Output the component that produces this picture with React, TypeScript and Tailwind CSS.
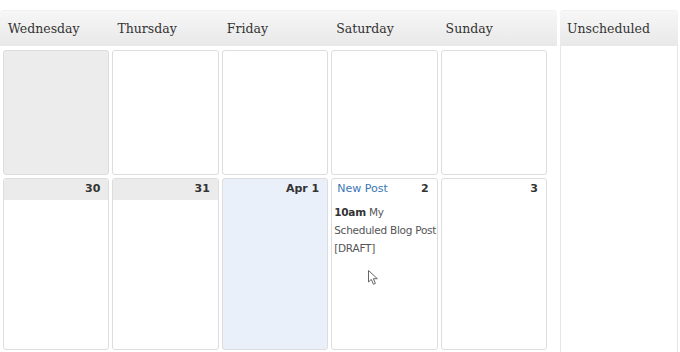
const days = ["Wednesday", "Thursday", "Friday", "Saturday", "Sunday"];

function DayNum({ label, gray }: { label: string; gray?: boolean }) {
  return (
    <div
      className={`h-[21px] flex items-center justify-end pr-[8px] text-[11px] font-bold text-[#333] ${
        gray ? "bg-[#ebebeb]" : ""
      }`}
    >
      {label}
    </div>
  );
}

function Cursor() {
  return (
    <svg
      className="absolute left-[368px] top-[270px]"
      width="12"
      height="16"
      viewBox="0 0 12 16"
    >
      <path
        d="M0.5 0.5 L0.5 12 L3.3 9.4 L5.4 14.3 L7.4 13.4 L5.4 8.7 L9.3 8.7 Z"
        fill="white"
        stroke="#666"
        strokeWidth="1"
        strokeLinejoin="round"
      />
    </svg>
  );
}

export default function App() {
  return (
    <div className="w-[680px] h-[352px] bg-white overflow-hidden relative font-['DejaVu_Sans',sans-serif]">
      <div className="flex pt-[10px] h-full">
        {/* calendar */}
        <div className="w-[557px] flex flex-col">
          <div className="h-[36px] rounded-t-[4px] border-t border-[#f0f0f0] bg-gradient-to-b from-[#f7f7f7] to-[#e8e8e8] grid grid-cols-5 gap-[3px] pl-[3px] pr-[10px]">
            {days.map((d) => (
              <div
                key={d}
                className="flex items-center pl-[5px] pt-[2px] font-['DejaVu_Serif',serif] text-[12.5px] text-[#333]"
              >
                {d}
              </div>
            ))}
          </div>
          <div className="grid grid-cols-5 gap-[3px] pl-[3px] pr-[10px] pt-[4px]">
            <div className="h-[125px] rounded-[3px] border border-[#ddd] bg-[#ececec]" />
            <div className="h-[125px] rounded-[3px] border border-[#ddd]" />
            <div className="h-[125px] rounded-[3px] border border-[#ddd]" />
            <div className="h-[125px] rounded-[3px] border border-[#ddd]" />
            <div className="h-[125px] rounded-[3px] border border-[#ddd]" />
          </div>
          <div className="grid grid-cols-5 gap-[3px] pl-[3px] pr-[10px] pt-[3px]">
            <div className="h-[172px] rounded-[3px] border border-[#ddd] overflow-hidden">
              <DayNum label="30" gray />
            </div>
            <div className="h-[172px] rounded-[3px] border border-[#ddd] overflow-hidden">
              <DayNum label="31" gray />
            </div>
            <div className="h-[172px] rounded-[3px] border border-[#ddd] bg-[#e9f0fa] overflow-hidden">
              <DayNum label="Apr 1" />
            </div>
            <div className="h-[172px] rounded-[3px] border border-[#ddd] overflow-hidden">
              <div className="h-[21px] flex items-center justify-between pl-[5px] pr-[8px] text-[11px]">
                <span className="text-[#3b76b5]">New Post</span>
                <span className="font-bold text-[#333]">2</span>
              </div>
              <div className="pl-[2px] pt-[3px] text-[10.5px] tracking-[-0.25px] leading-[18px] text-[#555] whitespace-nowrap">
                <div>
                  <span className="font-bold text-[#333]">10am</span> My
                </div>
                <div>Scheduled Blog Post</div>
                <div>[DRAFT]</div>
              </div>
            </div>
            <div className="h-[172px] rounded-[3px] border border-[#ddd] overflow-hidden">
              <DayNum label="3" />
            </div>
          </div>
        </div>

        {/* unscheduled */}
        <div className="w-[118px] ml-[3px] flex flex-col">
          <div className="h-[36px] rounded-t-[4px] border-t border-[#f0f0f0] bg-gradient-to-b from-[#f7f7f7] to-[#e8e8e8] flex items-center pl-[7px] pt-[2px] font-['DejaVu_Serif',serif] text-[12.5px] text-[#333]">
            Unscheduled
          </div>
          <div className="flex-1 border-x border-[#e6e6e6]" />
        </div>
      </div>

      <Cursor />
    </div>
  );
}
